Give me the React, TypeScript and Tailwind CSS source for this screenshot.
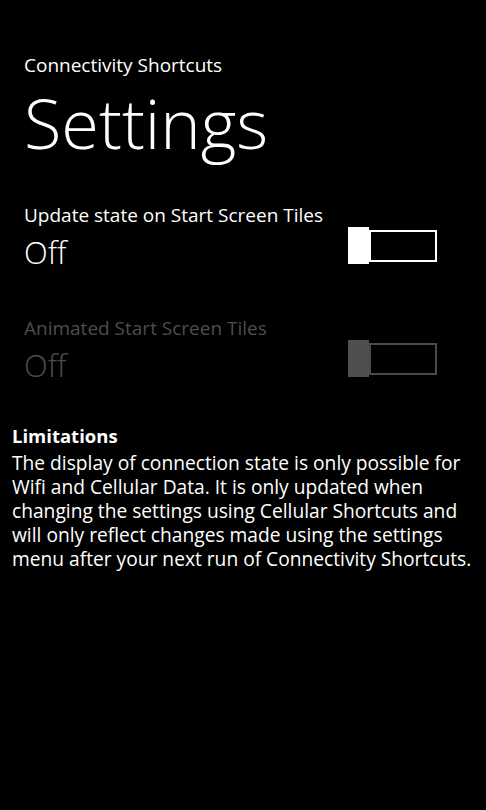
function Toggle({ disabled }: { disabled?: boolean }) {
  return (
    <div className="relative mt-6 h-[37px] w-[89px] shrink-0">
      <div
        className={`absolute top-[3px] right-0 h-[32px] w-[68px] border-2 ${
          disabled ? "border-[#4a4a4a]" : "border-white"
        }`}
      />
      <div
        className={`absolute top-0 left-0 h-[37px] w-[21px] ${disabled ? "bg-[#4f504d]" : "bg-white"}`}
      />
    </div>
  );
}

function SettingRow({ label, disabled, className }: { label: string; disabled?: boolean; className?: string }) {
  const color = disabled ? "text-[#4d4d4d]" : "text-white";
  return (
    <div className={`flex justify-between pr-[49px] ${className ?? ""}`}>
      <div className={color}>
        <div className="text-[19px] leading-6">{label}</div>
        <div className="mt-[9px] text-[31px] leading-8 font-light">Off</div>
      </div>
      <Toggle disabled={disabled} />
    </div>
  );
}

export default function App() {
  return (
    <div
      className="h-[810px] w-[486px] overflow-hidden bg-black text-white"
      style={{ fontFamily: '"Open Sans", "Noto Sans", sans-serif' }}
    >
      <div className="pt-[53px] pl-6">
        <div className="text-[19px] leading-6">Connectivity Shortcuts</div>
        <h1 className="mt-[2px] text-[68.5px] leading-[88px] font-light">Settings</h1>
        <SettingRow className="mt-9" label="Update state on Start Screen Tiles" />
        <SettingRow className="mt-12" label="Animated Start Screen Tiles" disabled />
      </div>
      <div className="mt-[43px] px-3">
        <h2 className="text-[18.5px] leading-6 font-bold">Limitations</h2>
        <p className="mt-[3px] text-[19.2px] leading-6">
          The display of connection state is only possible for
          <br />
          Wifi and Cellular Data. It is only updated when
          <br />
          changing the settings using Cellular Shortcuts and
          <br />
          will only reflect changes made using the settings
          <br />
          menu after your next run of Connectivity Shortcuts.
        </p>
      </div>
    </div>
  );
}
